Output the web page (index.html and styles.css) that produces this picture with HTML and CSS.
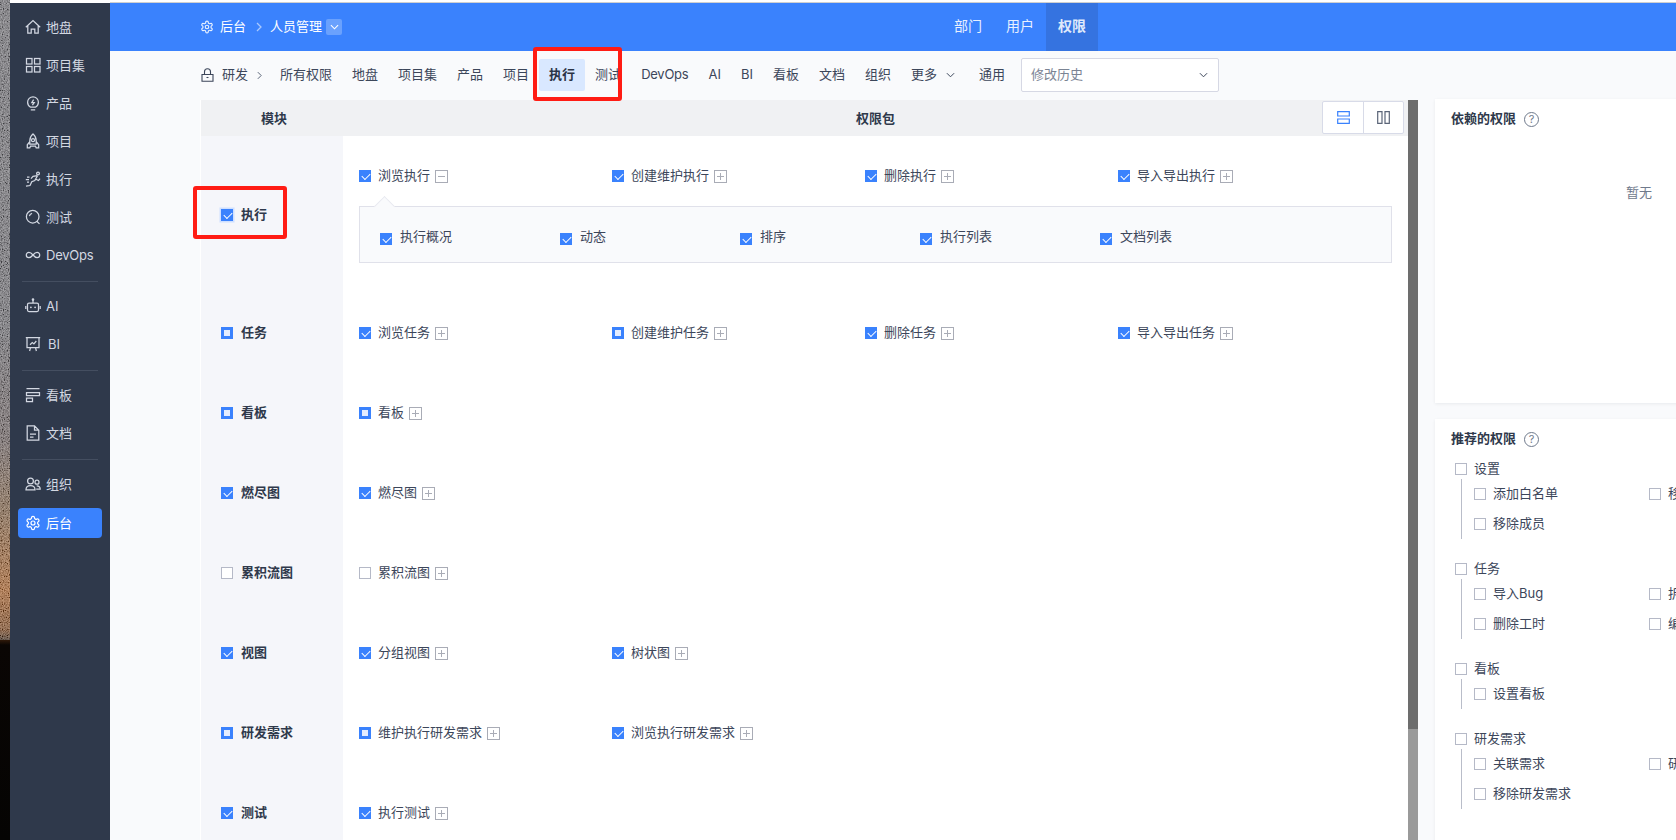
FILE: index.html
```html
<!DOCTYPE html>
<html lang="zh-CN">
<head>
<meta charset="utf-8">
<title>权限</title>
<link rel="stylesheet" href="styles.css">
</head>
<body>
<svg class="defs" width="0" height="0" aria-hidden="true">
  <defs>
    <symbol id="gear" viewBox="0 0 24 24"><path d="M12.22 2h-.44a2 2 0 0 0-2 2v.18a2 2 0 0 1-1 1.73l-.43.25a2 2 0 0 1-2 0l-.15-.08a2 2 0 0 0-2.73.73l-.22.38a2 2 0 0 0 .73 2.73l.15.1a2 2 0 0 1 1 1.72v.51a2 2 0 0 1-1 1.74l-.15.09a2 2 0 0 0-.73 2.73l.22.38a2 2 0 0 0 2.73.73l.15-.08a2 2 0 0 1 2 0l.43.25a2 2 0 0 1 1 1.73V20a2 2 0 0 0 2 2h.44a2 2 0 0 0 2-2v-.18a2 2 0 0 1 1-1.73l.43-.25a2 2 0 0 1 2 0l.15.08a2 2 0 0 0 2.73-.73l.22-.39a2 2 0 0 0-.73-2.73l-.15-.08a2 2 0 0 1-1-1.74v-.5a2 2 0 0 1 1-1.74l.15-.09a2 2 0 0 0 .73-2.73l-.22-.38a2 2 0 0 0-2.73-.73l-.15.08a2 2 0 0 1-2 0l-.43-.25a2 2 0 0 1-1-1.73V4a2 2 0 0 0-2-2z"/><circle cx="12" cy="12" r="3"/></symbol>
    <filter id="grain" x="0" y="0" width="100%" height="100%"><feTurbulence type="fractalNoise" baseFrequency="0.85" numOctaves="2" seed="4"/><feColorMatrix type="matrix" values="2 0 0 0 -.5 2 0 0 0 -.5 2 0 0 0 -.5 0 0 0 0 .4"/></filter>
  </defs>
</svg>
<div class="page">
  <div class="wall">
    <svg class="wall-noise" width="10" height="640"><rect width="10" height="640" filter="url(#grain)"/></svg>
  </div>

  <nav class="side">
    <a class="side-item"><svg class="ic" viewBox="0 0 16 16"><path d="M.8 8.200 8 1.600l7.200 6.600M2.800 6.800v7.400h3.400v-4.200h3.600v4.200h3.400V6.800"/></svg>地盘</a>
    <a class="side-item"><svg class="ic" viewBox="0 0 16 16"><rect x="1.500" y="1.500" width="5.500" height="5.500"/><rect x="9.500" y="1.500" width="5.500" height="5.500"/><rect x="1.500" y="9.500" width="5.500" height="5.500"/><rect x="9.500" y="9.500" width="5.500" height="5.500"/></svg>项目集</a>
    <a class="side-item"><svg class="ic" viewBox="0 0 16 16"><path d="M5.600 12.200C3.900 11.200 2.600 9.600 2.600 7.200a5.400 5.400 0 0 1 10.800 0c0 2.400-1.300 4-3 5zM5.800 14.900h4.400M8.600 4.600 6.800 7.600h2.400L7.400 10"/></svg>产品</a>
    <a class="side-item"><svg class="ic" viewBox="0 0 16 16"><path d="M8 .9c2.200 1.900 3.200 4.300 3.200 7v3.200H4.800V7.900c0-2.700 1-5.100 3.200-7zM4.800 8.600 2.300 11.800v3h2.500l.8-1.800h4.800l.8 1.800h2.500v-3l-2.500-3.200"/><circle cx="8" cy="7.200" r="1.500"/></svg>项目</a>
    <a class="side-item"><svg class="ic" viewBox="0 0 16 16"><circle cx="13" cy="2.500" r="1.400"/><path d="M12.500 4.700 8 5.400 6 7.700M12.500 4.700 9.800 9.500l-3 1.300L5 14.500l-4 .7M10.500 8l3 1.500L15 7.500M4.500 6H2M4 8.500H.8M4 11H2"/></svg>执行</a>
    <a class="side-item"><svg class="ic" viewBox="0 0 16 16"><circle cx="7.700" cy="7.700" r="6.300"/><path d="m11.800 12.200 2.700 2.700M4.400 7.200c.2-1.500 1.200-2.600 2.700-2.900"/></svg>测试</a>
    <a class="side-item"><svg class="ic" viewBox="0 0 16 16"><path d="M8 8C6.700 6.400 5.500 5.400 3.900 5.400a2.600 2.600 0 0 0 0 5.200C5.500 10.600 6.700 9.600 8 8c1.300-1.600 2.500-2.600 4.100-2.600a2.600 2.600 0 0 1 0 5.200C10.500 10.600 9.300 9.600 8 8z"/></svg><span class="lat">DevOps</span></a>
    <div class="side-rule"></div>
    <a class="side-item"><svg class="ic" viewBox="0 0 16 16"><rect x="2.500" y="5" width="11" height="8.500" rx="1.500"/><path d="M8 5V2M.8 8v3M15.200 8v3"/><circle cx="8" cy="1.600" r=".7"/><circle class="dot" cx="5.900" cy="9.300" r=".9"/><circle class="dot" cx="10.100" cy="9.300" r=".9"/></svg>AI</a>
    <a class="side-item"><svg class="ic" viewBox="0 0 16 16"><path d="M.8 1.700h14.400M2 1.700v10h12v-10M5.500 11.700 4.600 15M10.500 11.700l.9 3.300M5 8.700l2.300-2.200 1.600 1.400L11.300 5"/></svg><span class="bi">BI</span></a>
    <div class="side-rule"></div>
    <a class="side-item"><svg class="ic" viewBox="0 0 16 16"><path d="M1.500 1.500h13M1.500 8.500v-3h13v3zM1.500 11h6v3.500h-6z"/></svg>看板</a>
    <a class="side-item"><svg class="ic" viewBox="0 0 16 16"><path d="M9.500.9H2.200v14.200h11.600V5.200zM9.500 1v4.200h4.200M5 9h6M5 12h3.500"/></svg>文档</a>
    <div class="side-rule"></div>
    <a class="side-item"><svg class="ic" viewBox="0 0 16 16"><circle cx="5.500" cy="5" r="2.900"/><path d="M1 13.800c0-2.500 1.900-4.100 4.500-4.100s4.500 1.600 4.500 4.100z"/><circle cx="12" cy="6.200" r="2"/><path d="M11.700 9.900c2.100 0 3.500 1.200 3.500 3.200h-4"/></svg>组织</a>
    <a class="side-item side-active"><svg class="ic"><use href="#gear"/></svg>后台</a>
  </nav>

  <main class="main">
    <header class="top">
      <div class="crumb">
        <svg class="crumb-gear"><use href="#gear"/></svg>
        <span class="crumb-text">后台</span>
        <svg class="crumb-arrow" viewBox="0 0 6 10"><path d="m1 1 4 4-4 4"/></svg>
        <span class="crumb-text">人员管理</span>
        <span class="crumb-drop"><svg viewBox="0 0 10 6"><path d="m1 1 4 4 4-4"/></svg></span>
      </div>
      <div class="tabs">
        <a class="tab">部门</a>
        <a class="tab">用户</a>
        <a class="tab tab-on">权限</a>
      </div>
    </header>

    <div class="sub">
      <svg class="lock" viewBox="0 0 13 14"><path d="M3.500 6.500V3.800a3 3 0 0 1 6 0v2.700M1 6.500h11v6.800H1z"/><path d="M5.500 9.500h2"/></svg>
      <span class="sub-lead">研发</span>
      <svg class="sub-arrow" viewBox="0 0 6 10"><path d="m1 1 4 4-4 4"/></svg>
      <a class="sub-item">所有权限</a>
      <a class="sub-item">地盘</a>
      <a class="sub-item">项目集</a>
      <a class="sub-item">产品</a>
      <a class="sub-item">项目</a>
      <a class="sub-item sub-on">执行</a>
      <a class="sub-item">测试</a>
      <a class="sub-item lat">DevOps</a>
      <a class="sub-item">AI</a>
      <a class="sub-item">BI</a>
      <a class="sub-item">看板</a>
      <a class="sub-item">文档</a>
      <a class="sub-item">组织</a>
      <a class="sub-item">更多<svg class="more" viewBox="0 0 10 6"><path d="m1 1 4 4 4-4"/></svg></a>
      <a class="sub-item">通用</a>
      <div class="select"><span>修改历史</span><svg viewBox="0 0 10 6"><path d="m1 1 4 4 4-4"/></svg></div>
    </div>

    <div class="body">
      <section class="table">
        <div class="thead">
          <div class="th-mod">模块</div>
          <div class="th-perm">权限包</div>
          <div class="toggle">
            <span class="toggle-btn toggle-on"><svg viewBox="0 0 13 13"><path d="M.7.700h11.600v4.300H.7zM.7 8h11.600v4.300H.7z"/></svg></span>
            <span class="toggle-btn"><svg viewBox="0 0 13 13"><path d="M.7.700H5v11.600H.7zM8 .7h4.300v11.600H8z"/></svg></span>
          </div>
        </div>

        <div class="row row-first">
          <div class="mod"><span class="cb on focus"></span>执行</div>
          <div class="perm">
            <div class="cols">
              <label class="it"><span class="cb on"></span>浏览执行<i class="pm minus"></i></label>
              <label class="it"><span class="cb on"></span>创建维护执行<i class="pm"></i></label>
              <label class="it"><span class="cb on"></span>删除执行<i class="pm"></i></label>
              <label class="it"><span class="cb on"></span>导入导出执行<i class="pm"></i></label>
            </div>
            <div class="detail">
              <label class="dt"><span class="cb on"></span>执行概况</label>
              <label class="dt"><span class="cb on"></span>动态</label>
              <label class="dt"><span class="cb on"></span>排序</label>
              <label class="dt"><span class="cb on"></span>执行列表</label>
              <label class="dt"><span class="cb on"></span>文档列表</label>
            </div>
          </div>
        </div>

        <div class="row">
          <div class="mod"><span class="cb part"></span>任务</div>
          <div class="perm"><div class="cols">
            <label class="it"><span class="cb on"></span>浏览任务<i class="pm"></i></label>
            <label class="it"><span class="cb part"></span>创建维护任务<i class="pm"></i></label>
            <label class="it"><span class="cb on"></span>删除任务<i class="pm"></i></label>
            <label class="it"><span class="cb on"></span>导入导出任务<i class="pm"></i></label>
          </div></div>
        </div>
        <div class="row">
          <div class="mod"><span class="cb part"></span>看板</div>
          <div class="perm"><div class="cols">
            <label class="it"><span class="cb part"></span>看板<i class="pm"></i></label>
          </div></div>
        </div>
        <div class="row">
          <div class="mod"><span class="cb on"></span>燃尽图</div>
          <div class="perm"><div class="cols">
            <label class="it"><span class="cb on"></span>燃尽图<i class="pm"></i></label>
          </div></div>
        </div>
        <div class="row">
          <div class="mod"><span class="cb"></span>累积流图</div>
          <div class="perm"><div class="cols">
            <label class="it"><span class="cb"></span>累积流图<i class="pm"></i></label>
          </div></div>
        </div>
        <div class="row">
          <div class="mod"><span class="cb on"></span>视图</div>
          <div class="perm"><div class="cols">
            <label class="it"><span class="cb on"></span>分组视图<i class="pm"></i></label>
            <label class="it"><span class="cb on"></span>树状图<i class="pm"></i></label>
          </div></div>
        </div>
        <div class="row">
          <div class="mod"><span class="cb part"></span>研发需求</div>
          <div class="perm"><div class="cols">
            <label class="it"><span class="cb part"></span>维护执行研发需求<i class="pm"></i></label>
            <label class="it"><span class="cb on"></span>浏览执行研发需求<i class="pm"></i></label>
          </div></div>
        </div>
        <div class="row">
          <div class="mod"><span class="cb on"></span>测试</div>
          <div class="perm"><div class="cols">
            <label class="it"><span class="cb on"></span>执行测试<i class="pm"></i></label>
          </div></div>
        </div>
      </section>

      <div class="scroll"><div class="thumb"></div></div>

      <aside class="panels">
        <section class="card card-dep">
          <h3 class="card-title"><span class="title-text">依赖的权限</span><span class="help">?</span></h3>
          <p class="empty">暂无</p>
        </section>
        <section class="card">
          <h3 class="card-title"><span class="title-text">推荐的权限</span><span class="help">?</span></h3>
          <div class="group">
            <label class="g-head"><span class="cb"></span>设置</label>
            <div class="g-body">
              <label class="g-it"><span class="cb"></span>添加白名单</label>
              <label class="g-it"><span class="cb"></span>移除白名单</label>
              <label class="g-it"><span class="cb"></span>移除成员</label>
            </div>
          </div>
          <div class="group">
            <label class="g-head"><span class="cb"></span>任务</label>
            <div class="g-body">
              <label class="g-it"><span class="cb"></span>导入Bug</label>
              <label class="g-it"><span class="cb"></span>拆分任务</label>
              <label class="g-it"><span class="cb"></span>删除工时</label>
              <label class="g-it"><span class="cb"></span>编辑工时</label>
            </div>
          </div>
          <div class="group">
            <label class="g-head"><span class="cb"></span>看板</label>
            <div class="g-body">
              <label class="g-it"><span class="cb"></span>设置看板</label>
            </div>
          </div>
          <div class="group">
            <label class="g-head"><span class="cb"></span>研发需求</label>
            <div class="g-body">
              <label class="g-it"><span class="cb"></span>关联需求</label>
              <label class="g-it"><span class="cb"></span>研发需求排序</label>
              <label class="g-it"><span class="cb"></span>移除研发需求</label>
            </div>
          </div>
        </section>
      </aside>
    </div>
  </main>

  <div class="mark mark-nav"></div>
  <div class="mark mark-mod"></div>
</div>
</body>
</html>
```

FILE: styles.css
```css
* { box-sizing: border-box; }
html, body { margin: 0; height: 100%; overflow: hidden; }
body {
  font-family: Inter, "Noto Sans CJK SC", sans-serif;
  font-size: 13px;
  line-height: 20px;
  color: #313c52;
  background: #fff;
}
.defs { position: absolute; }
.lat { letter-spacing: -.25px; }
.page {
  position: relative;
  display: flex;
  width: 1676px;
  height: 840px;
  overflow: hidden;
}

/* desktop wallpaper peeking through on the left */
.wall {
  flex: none;
  width: 10px;
  background: linear-gradient(to bottom,
    #6a696f 0, #66656b 330px, #665a5a 440px, #7d5b3d 510px, #a9591c 590px, #7a3f14 630px, #0a0604 645px, #050403 840px);
}
.wall-noise { display: block; }

/* sidebar */
.side {
  flex: none;
  width: 100px;
  margin-top: 3px;
  padding: 9px 8px 0;
  background: #2f394b;
  display: flex;
  flex-direction: column;
}
.side-item {
  display: flex;
  align-items: center;
  gap: 5px;
  height: 30px;
  margin-bottom: 8px;
  padding-left: 7px;
  border-radius: 4px;
  color: #d3d8e2;
}
.side-item .ic {
  flex: none;
  width: 16px;
  height: 16px;
  fill: none;
  stroke: #d3d8e2;
  stroke-width: 1.250;
}
.side-item .ic .dot { fill: #d3d8e2; stroke: none; }
.side-item .bi { margin-left: 2px; }
.side-rule {
  height: 1px;
  margin: 3px 4px 9px;
  background: #444e60;
}
.side-active {
  margin-top: 1px;
  background: #3a82fd;
  color: #fff;
}
.side-active .ic { stroke: #fff; stroke-width: 1.800; }

/* main column */
.main {
  flex: 1;
  min-width: 0;
  display: flex;
  flex-direction: column;
  margin-top: 3px;
  background: #f9fafc;
  box-shadow: 0 -1px 0 #cfcfcf;
}
.top {
  flex: none;
  display: flex;
  align-items: stretch;
  height: 48px;
  padding-left: 91px;
  background: #3a82fd;
  color: #fff;
}
.crumb {
  display: flex;
  align-items: center;
  width: 741px;
}
.crumb-text { padding-bottom: 2px; }
.crumb-gear {
  width: 14px;
  height: 14px;
  margin-left: -1px;
  margin-right: 6px;
  fill: none;
  stroke: #e6efff;
  stroke-width: 2;
}
.crumb-arrow {
  width: 6px;
  height: 10px;
  margin: 0 8px 0 10px;
  fill: none;
  stroke: #a9c8fd;
  stroke-width: 1.300;
}
.crumb-drop {
  width: 16px;
  height: 16px;
  margin-left: 4px;
  border-radius: 2px;
  background: #6aa1fd;
  display: flex;
  align-items: center;
  justify-content: center;
}
.crumb-drop svg {
  width: 9px;
  height: 6px;
  fill: none;
  stroke: #fff;
  stroke-width: 1.200;
}
.tabs { display: flex; font-size: 14px; }
.tab {
  display: flex;
  align-items: center;
  padding: 0 12px 2px;
  color: #e8f0ff;
}
.tab-on {
  background: #3573e0;
  font-weight: 700;
  color: #dfe9fb;
}

/* second level nav */
.sub {
  flex: none;
  display: flex;
  align-items: center;
  height: 49px;
  padding-left: 91px;
  padding-bottom: 1px;
  color: #3c465a;
}
.sub-lead { padding-bottom: 2px; }
.lock {
  width: 13px;
  height: 14px;
  margin-right: 8px;
  fill: none;
  stroke: #3c465a;
  stroke-width: 1.100;
}
.sub-arrow {
  width: 5px;
  height: 9px;
  margin: 0 8px 0 9px;
  fill: none;
  stroke: #5b6578;
  stroke-width: 1.200;
}
.sub-item {
  display: flex;
  align-items: center;
  height: 32px;
  padding: 0 10px 2px;
  border-radius: 2px;
  white-space: nowrap;
}
.sub-on {
  background: #d9e8ff;
  font-weight: 700;
  color: #2b3446;
}
.more {
  width: 9px;
  height: 6px;
  margin-left: 9px;
  margin-right: 4px;
  margin-top: 2px;
  fill: none;
  stroke: #3c465a;
  stroke-width: 1.100;
}
.select {
  flex: none;
  width: 198px;
  height: 34px;
  margin-left: 6px;
  padding: 0 9px 2px;
  background: #fff;
  border: 1px solid #d6d8e4;
  border-radius: 2px;
  display: flex;
  align-items: center;
  justify-content: space-between;
  color: #7b8494;
}
.select svg {
  width: 9px;
  height: 6px;
  margin-right: 1px;
  margin-top: 2px;
  fill: none;
  stroke: #3c465a;
  stroke-width: 1.100;
}

/* body */
.body {
  flex: 1;
  min-height: 0;
  display: flex;
  padding-left: 90px;
}
.table {
  flex: none;
  width: 1208px;
  height: 800px;
  overflow: hidden;
  border-left: 1px solid #fff;
  background: #fff;
}
.thead {
  position: relative;
  display: flex;
  height: 36px;
  background: #f0f1f3;
  font-weight: 700;
  align-items: center;
  text-align: center;
  color: #2f394b;
}
.th-mod { width: 142px; padding-left: 4px; }
.th-perm { flex: 1; }
.toggle {
  position: absolute;
  top: 1px;
  right: 4px;
  display: flex;
  height: 33px;
  background: #fff;
  border: 1px solid #d8dbe8;
  border-radius: 2px;
}
.toggle-btn {
  width: 40px;
  display: flex;
  align-items: center;
  justify-content: center;
}
.toggle-btn + .toggle-btn { border-left: 1px solid #d8dbe8; }
.toggle-btn svg {
  width: 13px;
  height: 13px;
  fill: none;
  stroke: #5b6578;
  stroke-width: 1.200;
}
.toggle-on svg { stroke: #3a82fd; }

.row { display: flex; height: 80px; }
.row-first { height: 156px; }
.mod {
  flex: none;
  width: 142px;
  padding-left: 20px;
  display: flex;
  align-items: center;
  gap: 8px;
  background: #f5f6fa;
  font-weight: 700;
  color: #2f394b;
}
.mod .cb { margin-top: 2px; }
.perm {
  flex: 1;
  min-width: 0;
  padding: 30px 16px 0;
  color: #3c465a;
}
.row-first .perm { padding-top: 29px; }
.cols { display: grid; grid-template-columns: repeat(4, 253px); }
.it { display: flex; align-items: center; height: 20px; }
.it .cb { margin-right: 7px; margin-top: 2px; }

.cb {
  position: relative;
  flex: none;
  display: inline-block;
  width: 12px;
  height: 12px;
  background: #fff;
  border: 1px solid #b5b9c7;
}
.cb.on, .cb.part { background: #3a82fd; border-color: #3a82fd; }
.cb.on::after {
  content: "";
  position: absolute;
  left: 1.500px;
  top: 2px;
  width: 7px;
  height: 4px;
  border-left: 1.500px solid #fff;
  border-bottom: 1.500px solid #fff;
  transform: rotate(-45deg);
}
.cb.part::after {
  content: "";
  position: absolute;
  left: 2px;
  top: 2px;
  width: 6px;
  height: 6px;
  background: #e4edff;
}
.cb.focus { box-shadow: 0 0 0 1.500px #cfe0ff; }

.pm {
  position: relative;
  flex: none;
  width: 13px;
  height: 13px;
  margin-left: 5px;
  margin-top: 2px;
  border: 1px solid #a9acb6;
  background: #fff;
}
.pm::before {
  content: "";
  position: absolute;
  left: 2px;
  top: 5px;
  width: 7px;
  height: 1px;
  background: #a9acb6;
}
.pm::after {
  content: "";
  position: absolute;
  left: 5px;
  top: 2px;
  width: 1px;
  height: 7px;
  background: #a9acb6;
}
.pm.minus::after { display: none; }

.detail {
  position: relative;
  display: grid;
  grid-template-columns: repeat(5, 180px);
  align-items: center;
  height: 57px;
  margin-top: 21px;
  padding-left: 20px;
  background: #f9fafc;
  border: 1px solid #e0e1ea;
}
.detail::before {
  content: "";
  position: absolute;
  left: 17px;
  top: -8px;
  width: 14px;
  height: 14px;
  background: #f9fafc;
  border-left: 1px solid #e8e9f0;
  border-top: 1px solid #e8e9f0;
  transform: rotate(45deg);
}
.dt { position: relative; display: flex; align-items: center; height: 20px; margin-top: 3px; }
.dt .cb { margin-right: 8px; margin-top: 6px; }

/* scrollbar */
.scroll {
  flex: none;
  width: 10px;
  background: #9a9a9a;
}
.thumb { height: 629px; background: #6d6d6d; }

/* right panels */
.panels {
  flex: none;
  width: 408px;
  margin-left: 17px;
  margin-top: -1px;
  display: flex;
  flex-direction: column;
  gap: 16px;
}
.card {
  flex: none;
  background: #fff;
  box-shadow: 0 1px 3px rgba(40, 50, 70, .08);
  padding-bottom: 40px;
}
.card-dep { height: 304px; padding-bottom: 0; }
.card-title {
  display: flex;
  align-items: center;
  height: 40px;
  margin: 0;
  padding-left: 16px;
  font-size: 13px;
  font-weight: 700;
  color: #2f394b;
}
.title-text { padding-bottom: 2px; }
.help {
  width: 15px;
  height: 15px;
  margin-left: 8px;
  border: 1px solid #6f7a8c;
  border-radius: 50%;
  color: #6f7a8c;
  font-size: 11px;
  font-weight: 400;
  line-height: 13px;
  text-align: center;
}
.empty {
  margin: 43px 0 0;
  text-align: center;
  color: #6f7a8c;
}
.group { margin: 0 0 20px 20px; color: #3c465a; }
.g-head, .g-it { display: flex; align-items: center; gap: 7px; padding-bottom: 2px; white-space: nowrap; }
.g-head .cb, .g-it .cb { margin-top: 2px; }
.g-head { height: 20px; }
.g-body {
  margin-left: 6px;
  padding-left: 12px;
  border-left: 1px solid #b9bdc9;
  display: grid;
  grid-template-columns: repeat(2, 175px);
  grid-auto-rows: 30px;
}

/* red annotation frames drawn over the screenshot */
.mark {
  position: absolute;
  border: 4px solid #ff1c14;
  border-radius: 3px;
  pointer-events: none;
}
.mark-nav { left: 533px; top: 47px; width: 89px; height: 54px; }
.mark-mod { left: 193px; top: 186px; width: 94px; height: 53px; }
```
